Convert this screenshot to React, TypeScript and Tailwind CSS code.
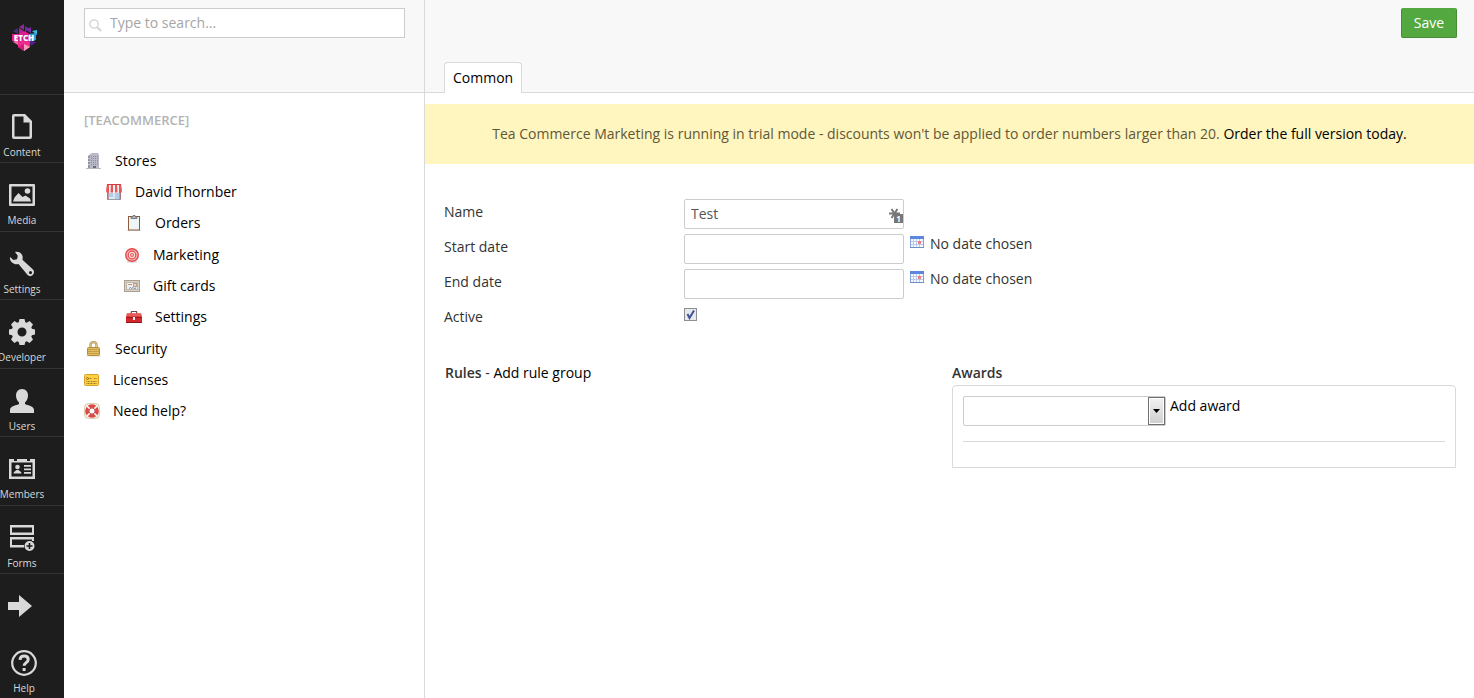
import React, { useState } from 'react';

type IconProps = { className?: string };

// --- LOGO ---
const Logo: React.FC = () => (
  <svg width="28" height="30" viewBox="0 0 28 30" aria-label="Etch">
    <path d="M14 1v6L9 4z" fill="#8a2b9b" />
    <path d="M3 8l5-3v6z" fill="#4d2a80" />
    <path d="M9 5l5 3-5 3z" fill="#a8279a" />
    <path d="M15 3l5 3-5 3z" fill="#5d2d9a" />
    <path d="M21 4v6l-5-3z" fill="#7d2aa8" />
    <path d="M22 8l5-1v5z" fill="#3bb8e8" />
    <path d="M14 8l6 3H8z" fill="#e3208e" />
    <path d="M2 11h8l-1 9-7-2z" fill="#e3208e" />
    <path d="M8 11h12v8H8z" fill="#d01d90" />
    <path d="M19 11l7-1v7l-6 2z" fill="#1f9fd8" />
    <path d="M3 19l5-2v5z" fill="#f06aa8" />
    <path d="M20 18l6 1-5 4z" fill="#5a1fa0" />
    <path d="M8 19l6-2 6 2v5l-6 4-6-4z" fill="#ee2a8f" />
    <path d="M14 21l6 3-6 4z" fill="#f4a0b4" />
    <path d="M8 24l6-3v7z" fill="#d31784" />
    <text x="14" y="18" textAnchor="middle" fontSize="8" fontWeight="800" fill="#fff" fontFamily="Open Sans, sans-serif">ETCH</text>
  </svg>
);

// --- SECTION ICONS ---
const ContentIcon: React.FC = () => (
  <svg width="26" height="26" viewBox="0 0 26 26" fill="currentColor">
    <path fillRule="evenodd" d="M5 0h11l7 7v16a2 2 0 0 1-2 2H5a2 2 0 0 1-2-2V2a2 2 0 0 1 2-2zm.5 2.500v20h15V8.500H14.500v-6z" />
  </svg>
);

const MediaIcon: React.FC = () => (
  <svg width="26" height="26" viewBox="0 0 26 26" fill="currentColor">
    <path fillRule="evenodd" d="M1 2h24a1 1 0 0 1 1 1v20a1 1 0 0 1-1 1H1a1 1 0 0 1-1-1V3a1 1 0 0 1 1-1zm1.500 2.500v17h21v-17z" />
    <path d="M4 19.500l1.500-4 4-4.500 4 4 3-1.500 4.500 3 1 3z" />
    <circle cx="18.500" cy="9" r="2.800" />
  </svg>
);

const WrenchIcon: React.FC = () => (
  <svg width="26" height="26" viewBox="0 0 26 26" fill="currentColor">
    <path
      fillRule="evenodd"
      d="M6 1c3-.6 6 .6 7.200 3.200.7 1.700.6 3.200.2 4.500L24 18.500c1.500 1.600 1.300 4-.2 5.500s-3.800 1.500-5.200 0L9.500 13c-2.200.6-4.600.3-6.500-1.500C1.300 10 .7 8 1 6l3.500 3 3.500-.8.800-3.400zM21.500 20a1.600 1.600 0 1 0 0 3.200 1.600 1.600 0 0 0 0-3.200z"
    />
  </svg>
);

const GearIcon: React.FC = () => (
  <svg width="26" height="26" viewBox="0 0 26 26" fill="currentColor">
    <path
      fillRule="evenodd"
      d="M10.500 0h5l.8 3.200 1.500.6L20.600 2l3.400 3.500-1.700 2.800.6 1.500 3.100.7v4.900l-3.100.8-.6 1.500 1.700 2.900-3.400 3.400-2.800-1.700-1.500.6-.8 3.100h-5l-.8-3.100-1.500-.6L5.400 24 2 20.600l1.700-2.900-.6-1.500-3.100-.8v-4.900l3.100-.7.600-1.500L2 5.500 5.400 2l2.800 1.800 1.500-.6zM13 8.500a4.500 4.500 0 1 0 0 9 4.500 4.500 0 0 0 0-9z"
    />
  </svg>
);

const UserIcon: React.FC = () => (
  <svg width="26" height="26" viewBox="0 0 26 26" fill="currentColor">
    <path d="M13 1c4 0 6 3 6 6.500 0 3-1.500 5.700-3 7V16c2 1.500 9 1.500 9 6v3H1v-3c0-4.500 7-4.500 9-6v-1.500c-1.500-1.300-3-4-3-7C7 4 9 1 13 1z" />
  </svg>
);

const MembersIcon: React.FC = () => (
  <svg width="26" height="26" viewBox="0 0 26 26" fill="currentColor">
    <path fillRule="evenodd" d="M0 3h5v2h3V3h10v2h3V3h5v20H0zm2.500 3.500v14h21v-14z" />
    <circle cx="8.500" cy="11" r="2.300" />
    <path d="M4.500 17.500c0-2 2-2.500 3-3.500h2c1 1 3 1.500 3 3.500z" />
    <path d="M15 9h7v1.800h-7zM15 12.500h7v1.800h-7zM15 16h7v1.800h-7z" />
  </svg>
);

const FormsIcon: React.FC = () => (
  <svg width="26" height="26" viewBox="0 0 26 26" fill="currentColor">
    <path fillRule="evenodd" d="M1 0h24v10H1zm2 2.500v5h20v-5z" />
    <path d="M1 12h24v4h-2v-1.500H3V20h12v2.500H1z" />
    <path fillRule="evenodd" d="M20.500 16a5 5 0 1 1 0 10 5 5 0 0 1 0-10zm-.8 2v2.200h-2.200v1.600h2.200V24h1.600v-2.200h2.200v-1.600h-2.200V18z" />
  </svg>
);

const ArrowIcon: React.FC = () => (
  <svg width="26" height="26" viewBox="0 0 26 26" fill="currentColor">
    <path d="M1 9h11V2l13 11-13 11v-7H1z" />
  </svg>
);

const HelpIcon: React.FC = () => (
  <svg width="26" height="26" viewBox="0 0 26 26" fill="none" stroke="currentColor">
    <circle cx="13" cy="13" r="11.800" strokeWidth="2.200" />
    <path d="M9 9.800c.2-2.600 2-3.800 4.200-3.800 2.400 0 4 1.300 4 3.400 0 3.200-4 3.200-4 6.400" strokeWidth="3" />
    <path d="M11.600 18h3v3h-3z" fill="currentColor" stroke="none" />
  </svg>
);

// --- TREE ICONS ---
const BuildingIcon: React.FC = () => (
  <svg width="16" height="16" viewBox="0 0 16 16">
    <path d="M0 15h15v1H0z" fill="#b9b9bf" />
    <path d="M2 3l3-2v14H2z" fill="#9494a8" />
    <path d="M4 1l2-1h6l1 2v13H4z" fill="#b9b9c8" />
    <path d="M5 3.500h8M5 5.500h8M5 7.500h8M5 9.500h8M5 11.500h8" stroke="#8d8da2" strokeDasharray="1 1" />
    <path d="M2 5.500h2M2 8.500h2M2 11.500h2" stroke="#c9c9d6" />
    <path d="M7 13h3v2H7z" fill="#666a80" />
  </svg>
);

const StoreIcon: React.FC = () => (
  <svg width="16" height="16" viewBox="0 0 16 16">
    <path d="M1.500 8h13v7.500h-13z" fill="#dbe7f5" stroke="#9aa0aa" />
    <path d="M3 9h4v4H3zM9 9h4v6H9z" fill="#b4cceb" />
    <path d="M2 9v6.500M14 9v6.500" stroke="#a65340" />
    <path d="M1 0h14l1 7-1 2H1L0 7z" fill="#f2f0f0" />
    <path d="M1 0h2v9H1L0 7zM5 0h2v8.500H4.500zM9 0h2l.5 8.500H9zM13 0h2l1 7-1 2h-2z" fill="#e8575a" />
    <path d="M1 0h14v1H1z" fill="#d8393d" />
  </svg>
);

const ClipboardIcon: React.FC = () => (
  <svg width="16" height="16" viewBox="0 0 16 16">
    <path d="M1 15h14v1H1z" fill="#ddd" />
    <rect x="2.500" y="1.500" width="11" height="13.500" fill="#eef6f5" stroke="#8e5a3c" />
    <path d="M5 3.500V2h2V.500h2V2h2v1.500z" fill="#c3c5cc" stroke="#777b84" />
  </svg>
);

const TargetIcon: React.FC = () => (
  <svg width="16" height="16" viewBox="0 0 16 16">
    <ellipse cx="8" cy="14.500" rx="5.500" ry="1.200" fill="#d8d8d8" />
    <circle cx="8" cy="8" r="7" fill="#e5494d" />
    <circle cx="8" cy="8" r="5" fill="none" stroke="#f6b7b4" strokeWidth="1.200" />
    <circle cx="8" cy="8" r="2.600" fill="#e8605f" stroke="#fbdcd8" strokeWidth="1.200" />
    <circle cx="8" cy="8" r=".8" fill="#fff" />
  </svg>
);

const GiftCardIcon: React.FC = () => (
  <svg width="16" height="16" viewBox="0 0 16 16">
    <rect x=".5" y="2.500" width="15" height="11" fill="#d9d2c6" stroke="#aaa092" />
    <rect x="2.500" y="4.500" width="11" height="7" fill="#f3efe8" stroke="#c1b7a8" />
    <path d="M4 6.500h4" stroke="#aaa092" />
    <rect x="9.500" y="5.500" width="3" height="3" fill="#e8d3ca" stroke="#b9a28c" />
    <path d="M5 10.500l1.500-1 1 1 1.500-1 1 1 2-.5" fill="none" stroke="#5b8cc4" />
  </svg>
);

const ToolboxIcon: React.FC = () => (
  <svg width="16" height="16" viewBox="0 0 16 16">
    <path d="M5 5l.5-2.500h5L11 5" fill="none" stroke="#6b4a4a" strokeWidth="1.200" />
    <path d="M1 4.500h14l1 4V14H0V8.500z" fill="#d0282c" />
    <path d="M1 4.500h14l.7 3H.3z" fill="#e85b58" />
    <path d="M0 8h16v1H0z" fill="#9c1a1e" />
    <path d="M7 8h2v3H7z" fill="#eee" />
    <path d="M0 13h16v1H0z" fill="#8b1519" />
  </svg>
);

const LockIcon: React.FC = () => (
  <svg width="16" height="16" viewBox="0 0 16 16">
    <path d="M0 14.500h15v1H0z" fill="#ddd" />
    <path d="M4.500 7V4a3 3 0 0 1 6 0v3" fill="none" stroke="#b59a5c" strokeWidth="2.400" />
    <path d="M4.500 7V4a3 3 0 0 1 6 0v3" fill="none" stroke="#ddc68c" />
    <rect x="1.500" y="6.500" width="12" height="8" rx="1" fill="#e3bf63" stroke="#b58c35" />
    <path d="M2 8.500h11M2 10.500h11M2 12.500h11" stroke="#c59d47" />
  </svg>
);

const LicenseIcon: React.FC = () => (
  <svg width="16" height="16" viewBox="0 0 16 16">
    <rect x=".5" y="2.500" width="14" height="11" rx="1" fill="#ffd23d" stroke="#d9a030" />
    <circle cx="3.500" cy="6.500" r="1" fill="none" stroke="#86652a" />
    <path d="M4.500 6.500H8M10 6.500h3M2.500 9.500h10M2.500 11.500h10" stroke="#9b7830" strokeDasharray="1 .5" />
  </svg>
);

const LifebuoyIcon: React.FC = () => (
  <svg width="16" height="16" viewBox="0 0 16 16">
    <rect x=".5" y=".5" width="15" height="15" rx="4" fill="#f3eee0" stroke="#d9ceb2" />
    <circle cx="8" cy="8" r="5" fill="none" stroke="#dd4744" strokeWidth="3.600" />
    <path d="M3 3l3 3M13 3l-3 3M3 13l3-3M13 13l-3-3" stroke="#fff" strokeWidth="1.600" />
    <circle cx="8" cy="8" r="3" fill="#fff" stroke="#b43835" strokeWidth=".8" />
  </svg>
);

// --- FORM ICONS ---
const SearchIcon: React.FC<IconProps> = ({ className }) => (
  <svg className={className} width="13" height="13" viewBox="0 0 13 13" fill="none" stroke="#d4d4d4">
    <circle cx="5" cy="5" r="4.200" strokeWidth="1.300" />
    <path d="M8 8l4 4" strokeWidth="2.200" />
  </svg>
);

const CalendarIcon: React.FC = () => (
  <svg width="14" height="12" viewBox="0 0 14 12">
    <path d="M0 0h14v12H0z" fill="#86a5dc" />
    <path d="M0 0h14v3H0z" fill="#5b88de" />
    <path d="M1 3h12v8H1z" fill="#f4f8ff" />
    <path d="M1 5.500h12M1 8.500h12M3.500 3v8M6.500 3v8M9.500 3v8" stroke="#b9cbe9" />
    <path d="M8 5h3v3H8z" fill="#e88381" />
    <path d="M0 11h14v1H0z" fill="#6f8fc4" />
  </svg>
);

const AutofillIcon: React.FC<IconProps> = ({ className }) => (
  <svg className={className} width="16" height="16" viewBox="0 0 16 16">
    <path d="M1 6.500h11M3.500 2l6 9M9.500 2l-6 9" stroke="#777" strokeWidth="2" />
    <path d="M6 7h9v9H6z" fill="#777" />
    <text x="10.500" y="14.500" textAnchor="middle" fontSize="8" fontWeight="700" fill="#fff" fontFamily="Open Sans, sans-serif">1</text>
  </svg>
);

// --- DATA ---
const sections = [
  { label: 'Content', Icon: ContentIcon },
  { label: 'Media', Icon: MediaIcon },
  { label: 'Settings', Icon: WrenchIcon },
  { label: 'Developer', Icon: GearIcon },
  { label: 'Users', Icon: UserIcon },
  { label: 'Members', Icon: MembersIcon },
  { label: 'Forms', Icon: FormsIcon },
];

const treeNodes = [
  { label: 'Stores', Icon: BuildingIcon, indent: 'pl-[22px]' },
  { label: 'David Thornber', Icon: StoreIcon, indent: 'pl-[42px]' },
  { label: 'Orders', Icon: ClipboardIcon, indent: 'pl-[62px]' },
  { label: 'Marketing', Icon: TargetIcon, indent: 'pl-[60px]' },
  { label: 'Gift cards', Icon: GiftCardIcon, indent: 'pl-[60px]' },
  { label: 'Settings', Icon: ToolboxIcon, indent: 'pl-[62px]' },
  { label: 'Security', Icon: LockIcon, indent: 'pl-[22px]' },
  { label: 'Licenses', Icon: LicenseIcon, indent: 'pl-[20px]' },
  { label: 'Need help?', Icon: LifebuoyIcon, indent: 'pl-[20px]' },
];

const inputClass = 'h-[30px] w-[220px] rounded-xs border border-[#ccc] bg-white px-1.5 pb-0.5 text-[#555] outline-none';

// --- COMPONENT: Section Nav ---
const SectionNav: React.FC = () => (
  <nav className="w-16 shrink-0 bg-[#1d1d1d] text-[10px] leading-4 text-[#d9d9d9]">
    <div className="flex h-[95px] border-b border-[#343434] pt-[23px] pl-2.5">
      <Logo />
    </div>
    <ul className="grid h-[479px] auto-rows-fr">
      {sections.map(({ label, Icon }) => (
        <li key={label} className="border-b border-[#343434]">
          <a href="#" className="flex w-11 flex-col items-center gap-1 pt-[19px]">
            <Icon />
            <span>{label}</span>
          </a>
        </li>
      ))}
    </ul>
    <button type="button" aria-label="More sections" className="mt-[19px] ml-[7px] block">
      <ArrowIcon />
    </button>
    <a href="#" className="mt-[31px] flex w-12 flex-col items-center gap-1">
      <HelpIcon />
      <span>Help</span>
    </a>
  </nav>
);

// --- COMPONENT: Tree ---
const TreePanel: React.FC = () => (
  <div className="w-[361px] shrink-0 border-r border-[#d9d9d9]">
    <div className="h-[93px] border-b border-[#d9d9d9] bg-[#f8f8f8] pt-2 pr-[19px] pl-5">
      <div className="relative">
        <SearchIcon className="absolute top-[11px] left-[5px]" />
        <input
          type="search"
          aria-label="Search"
          placeholder="Type to search..."
          className="block h-[30px] w-full border border-[#ccc] bg-white pb-0.5 pl-[25px] outline-none placeholder:text-[#a5a5a5]"
        />
      </div>
    </div>
    <h5 className="mt-[17px] pl-5 text-[13px] leading-5 font-semibold text-[#b3b3b3]">[TEACOMMERCE]</h5>
    <ul className="mt-[15px] grid h-[282px] auto-rows-fr text-black">
      {treeNodes.map(({ label, Icon, indent }) => (
        <li key={label} className={`flex items-center ${indent}`}>
          <a href="#" className="flex items-center gap-[13px]">
            <Icon />
            <span>{label}</span>
          </a>
        </li>
      ))}
    </ul>
  </div>
);

// --- COMPONENT: Date Row ---
const DateRow: React.FC<{ id: string; label: string }> = ({ id, label }) => (
  <div className="flex h-[35px] items-start">
    <label htmlFor={id} className="w-60 pt-[3px]">{label}</label>
    <input id={id} type="text" className={inputClass} />
    <button type="button" aria-label={`Pick ${label}`} className="mx-1.5 mt-0.5">
      <CalendarIcon />
    </button>
    <span>No date chosen</span>
  </div>
);

const App: React.FC = () => {
  const [name, setName] = useState('Test');
  const [active, setActive] = useState(true);
  const [award, setAward] = useState('');

  return (
    <div className="flex min-h-screen bg-white font-['Open_Sans',sans-serif] text-sm leading-5 text-[#333]">
      <SectionNav />
      <TreePanel />

      <main className="min-w-0 flex-1">
        <header className="flex h-[93px] flex-col justify-between border-b border-[#d9d9d9] bg-[#f8f8f8] pt-2 pr-[17px] pl-[19px]">
          <button type="button" className="h-[30px] w-14 self-end rounded-xs border border-[#468e36] border-t-[#53a93f] bg-[#53a93f] text-white">
            Save
          </button>
          <div className="-mb-px flex">
            <a href="#" className="rounded-t border border-b-0 border-[#d9d9d9] bg-white px-2 py-[5px] text-black">
              Common
            </a>
          </div>
        </header>

        <p className="mt-[11px] bg-[#fff5bf] px-5 py-5 text-center text-[#5f5836]">
          Tea Commerce Marketing is running in trial mode - discounts won't be applied to order numbers larger than 20.{' '}
          <a href="#" className="text-black">Order the full version today.</a>
        </p>

        <form className="mt-[35px] pl-[19px]" onSubmit={e => e.preventDefault()}>
          <div className="flex h-[35px] items-start">
            <label htmlFor="name" className="w-60 pt-[3px]">Name</label>
            <div className="relative">
              <input id="name" type="text" value={name} onChange={e => setName(e.target.value)} className={inputClass} />
              <AutofillIcon className="absolute top-2 right-0" />
            </div>
          </div>
          <DateRow id="start-date" label="Start date" />
          <DateRow id="end-date" label="End date" />
          <div className="flex h-[35px] items-start">
            <label htmlFor="active" className="w-60 pt-[3px]">Active</label>
            <div className="relative mt-1">
              <input
                id="active"
                type="checkbox"
                checked={active}
                onChange={e => setActive(e.target.checked)}
                className="block size-[13px] appearance-none border border-[#8e8f8f] bg-[#e6e9ee]"
              />
              {active && (
                <svg className="pointer-events-none absolute top-0 left-0" width="13" height="13" viewBox="0 0 13 13" fill="none" stroke="#3f5298" strokeWidth="2">
                  <path d="M3.500 6l2 4 4.500-7.500" />
                </svg>
              )}
            </div>
          </div>
        </form>

        <div className="mt-6 grid grid-cols-2 gap-[3px] pr-[18px] pl-5">
          <section>
            <strong className="font-semibold">Rules</strong> - <a href="#" className="text-black">Add rule group</a>
          </section>
          <section>
            <h2 className="font-semibold">Awards</h2>
            <div className="mt-0.5 rounded-t border border-[#d9d9d9] px-2.5 pt-2.5 pb-[25px]">
              <div className="flex items-start gap-1 border-b border-[#d9d9d9] pb-[15px]">
                <div className="relative">
                  <select
                    aria-label="Award"
                    value={award}
                    onChange={e => setAward(e.target.value)}
                    className="block h-[30px] w-[203px] appearance-none rounded-xs border border-[#ccc] bg-white px-1.5 outline-none"
                  >
                    <option value=""></option>
                  </select>
                  <span className="pointer-events-none absolute inset-y-px right-px flex w-[17px] items-center justify-center border border-[#707070] bg-linear-to-b from-[#f2f2f2] to-[#cfcfcf] inset-ring inset-ring-white">
                    <svg width="7" height="4" viewBox="0 0 7 4">
                      <path d="M0 0h7L3.500 4z" fill="#000" />
                    </svg>
                  </span>
                </div>
                <a href="#" className="text-black">Add award</a>
              </div>
            </div>
          </section>
        </div>
      </main>
    </div>
  );
};

export default App;
